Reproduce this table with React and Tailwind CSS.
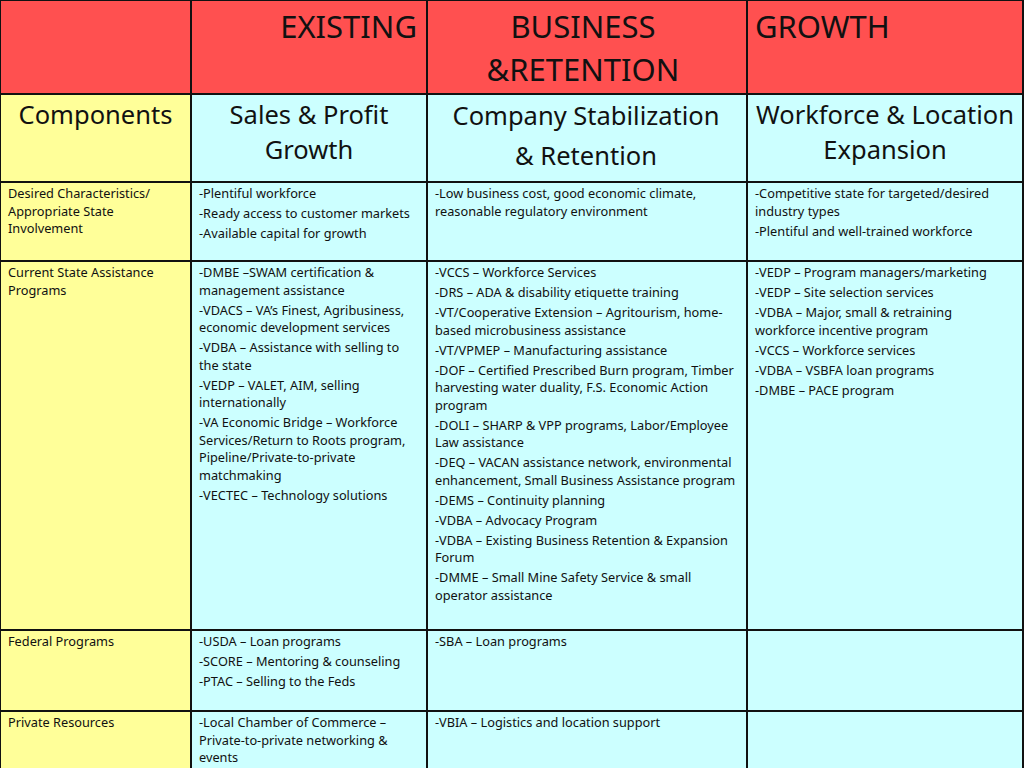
import React from "react";

const font = { fontFamily: '"Noto Sans", "Open Sans", sans-serif' };

function Items({ items }) {
  return (
    <div className="flex flex-col gap-[2.5px]">
      {items.map((t, i) => (
        <p key={i} className="leading-[17.5px]">{t}</p>
      ))}
    </div>
  );
}

const rows = [
  {
    label: "Desired Characteristics/ Appropriate State Involvement",
    h: "h-[79px]",
    c: [
      ["-Plentiful workforce", "-Ready access to customer markets", "-Available capital for growth"],
      ["-Low business cost, good economic climate, reasonable regulatory environment"],
      ["-Competitive state for targeted/desired industry types", "-Plentiful and well-trained workforce"],
    ],
  },
  {
    label: "Current State Assistance Programs",
    h: "h-[369px]",
    c: [
      [
        "-DMBE \u2013SWAM certification & management assistance",
        "-VDACS \u2013 VA\u2019s Finest, Agribusiness, economic development services",
        "-VDBA \u2013 Assistance with selling to the state",
        "-VEDP \u2013 VALET, AIM, selling internationally",
        "-VA Economic Bridge \u2013 Workforce Services/Return to Roots program, Pipeline/Private-to-private matchmaking",
        "-VECTEC \u2013 Technology solutions",
      ],
      [
        "-VCCS \u2013 Workforce Services",
        "-DRS \u2013 ADA & disability etiquette training",
        "-VT/Cooperative Extension \u2013 Agritourism, home-based microbusiness assistance",
        "-VT/VPMEP \u2013 Manufacturing assistance",
        "-DOF \u2013 Certified Prescribed Burn program, Timber harvesting water duality, F.S. Economic Action program",
        "-DOLI \u2013 SHARP & VPP programs, Labor/Employee Law assistance",
        "-DEQ \u2013 VACAN assistance network, environmental enhancement, Small Business Assistance program",
        "-DEMS \u2013 Continuity planning",
        "-VDBA \u2013 Advocacy Program",
        "-VDBA \u2013 Existing Business Retention & Expansion Forum",
        "-DMME \u2013 Small Mine Safety Service & small operator assistance",
      ],
      [
        "-VEDP \u2013 Program managers/marketing",
        "-VEDP \u2013 Site selection services",
        "-VDBA \u2013 Major, small & retraining workforce incentive program",
        "-VCCS \u2013 Workforce services",
        "-VDBA \u2013 VSBFA loan programs",
        "-DMBE \u2013 PACE program",
      ],
    ],
  },
  {
    label: "Federal Programs",
    h: "h-[81px]",
    c: [
      ["-USDA \u2013 Loan programs", "-SCORE \u2013 Mentoring & counseling", "-PTAC \u2013 Selling to the Feds"],
      ["-SBA \u2013 Loan programs"],
      [],
    ],
  },
  {
    label: "Private Resources",
    h: "h-[80px]",
    c: [
      ["-Local Chamber of Commerce \u2013 Private-to-private networking & events"],
      ["-VBIA \u2013 Logistics and location support"],
      [],
    ],
  },
];

export default function App() {
  return (
    <div className="w-[1024px] h-[768px] overflow-hidden bg-white text-[#111]" style={font}>
      <table className="border-collapse table-fixed w-[1023px] ml-[-1px] mt-[-1px]">
        <colgroup>
          <col className="w-[191px]" />
          <col className="w-[236px]" />
          <col className="w-[320px]" />
          <col className="w-[276px]" />
        </colgroup>
        <tbody>
          <tr className="h-[94px] bg-[#ff5050]">
            <td className="border-2 border-[#111]"></td>
            <td className="border-2 border-[#111] align-top text-right text-[31px] leading-[43px] pr-[9px] pt-[4px]">EXISTING</td>
            <td className="border-2 border-[#111] align-top text-center text-[31px] leading-[43px] pt-[4px] pr-[8px]">
              BUSINESS
              <br />
              &amp;RETENTION
            </td>
            <td className="border-2 border-[#111] align-top text-left text-[31px] leading-[43px] pl-[7px] pt-[4px]">GROWTH</td>
          </tr>
          <tr className="h-[88px]">
            <td className="border-2 border-[#111] bg-[#ffff99] align-top text-center text-[25.5px] leading-[35px] pt-[2px]">Components</td>
            <td className="border-2 border-[#111] bg-[#ccffff] align-top text-center text-[25.5px] leading-[35px] pt-[2px]">
              Sales &amp; Profit
              <br />
              Growth
            </td>
            <td className="border-2 border-[#111] bg-[#ccffff] align-top text-center text-[25.5px] leading-[40px] pt-[0px] pr-[2px]">
              Company Stabilization
              <br />
              &amp; Retention
            </td>
            <td className="border-2 border-[#111] bg-[#ccffff] align-top text-center text-[25.5px] leading-[35px] pt-[2px]">
              Workforce &amp; Location
              <br />
              Expansion
            </td>
          </tr>
          {rows.map((r, i) => (
            <tr key={i} className={r.h}>
              <td className="border-2 border-[#111] bg-[#ffff99] align-top text-[12.75px] leading-[17.5px] pl-[7px] pr-[6px] pt-[2px]">
                {r.label}
              </td>
              {r.c.map((items, j) => (
                <td key={j} className="border-2 border-[#111] bg-[#ccffff] align-top text-[12.75px] pl-[7px] pr-[7px] pt-[2px]">
                  <Items items={items} />
                </td>
              ))}
            </tr>
          ))}
        </tbody>
      </table>
    </div>
  );
}
